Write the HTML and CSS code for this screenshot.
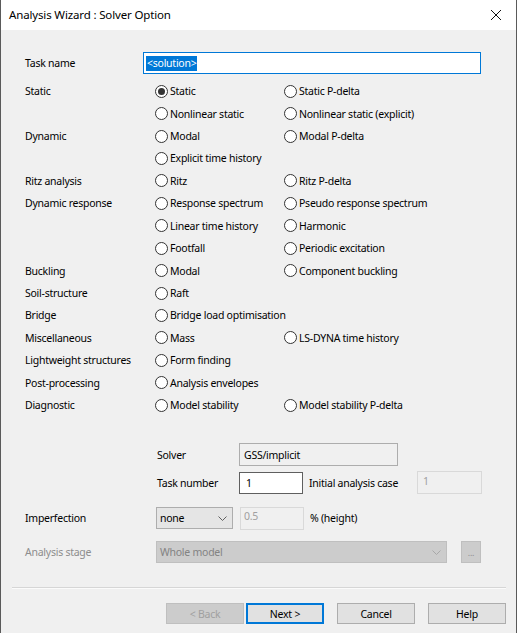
FILE: index.html
```html
<!DOCTYPE html>
<html lang="en">
<head>
    <meta charset="UTF-8">
    <title>Analysis Wizard : Solver Option</title>
    <link rel="stylesheet" href="styles.css">
</head>
<body>
    <div class="window">
        <div class="titlebar">
            <span class="title">Analysis Wizard : Solver Option</span>
            <svg class="close" viewBox="0 0 12 12" width="12" height="12">
                <path d="M1 1L11 11M11 1L1 11" stroke="#111" stroke-width="1" fill="none"/>
            </svg>
        </div>

        <div class="content">
            <div class="task-row">
                <span class="label">Task name</span>
                <div class="text-input focused"><span class="selected">&lt;solution&gt;</span></div>
            </div>

            <div class="options">
                <span class="label">Static</span>
                <label class="radio checked"><i></i>Static</label>
                <label class="radio"><i></i>Static P-delta</label>

                <span class="label"></span>
                <label class="radio"><i></i>Nonlinear static</label>
                <label class="radio"><i></i>Nonlinear static (explicit)</label>

                <span class="label">Dynamic</span>
                <label class="radio"><i></i>Modal</label>
                <label class="radio"><i></i>Modal P-delta</label>

                <span class="label"></span>
                <label class="radio span"><i></i>Explicit time history</label>

                <span class="label">Ritz analysis</span>
                <label class="radio"><i></i>Ritz</label>
                <label class="radio"><i></i>Ritz P-delta</label>

                <span class="label">Dynamic response</span>
                <label class="radio"><i></i>Response spectrum</label>
                <label class="radio"><i></i>Pseudo response spectrum</label>

                <span class="label"></span>
                <label class="radio"><i></i>Linear time history</label>
                <label class="radio"><i></i>Harmonic</label>

                <span class="label"></span>
                <label class="radio"><i></i>Footfall</label>
                <label class="radio"><i></i>Periodic excitation</label>

                <span class="label">Buckling</span>
                <label class="radio"><i></i>Modal</label>
                <label class="radio"><i></i>Component buckling</label>

                <span class="label">Soil-structure</span>
                <label class="radio span"><i></i>Raft</label>

                <span class="label">Bridge</span>
                <label class="radio span"><i></i>Bridge load optimisation</label>

                <span class="label">Miscellaneous</span>
                <label class="radio"><i></i>Mass</label>
                <label class="radio"><i></i>LS-DYNA time history</label>

                <span class="label">Lightweight structures</span>
                <label class="radio span"><i></i>Form finding</label>

                <span class="label">Post-processing</span>
                <label class="radio span"><i></i>Analysis envelopes</label>

                <span class="label">Diagnostic</span>
                <label class="radio"><i></i>Model stability</label>
                <label class="radio"><i></i>Model stability P-delta</label>
            </div>

            <div class="solver">
                <div class="solver-row">
                    <span class="sub-label">Solver</span>
                    <div class="readonly-box">GSS/implicit</div>
                </div>
                <div class="solver-row task-number">
                    <span class="sub-label">Task number</span>
                    <div class="text-input short">1</div>
                    <span class="after-label">Initial analysis case</span>
                    <div class="disabled-box">1</div>
                </div>
            </div>

            <div class="imperfection-row">
                <span class="label">Imperfection</span>
                <div class="select">
                    <span>none</span>
                    <svg viewBox="0 0 9 5" width="9" height="5"><path d="M0.5 0.5L4.5 4.5L8.5 0.5" stroke="#606060" fill="none"/></svg>
                </div>
                <div class="disabled-box short">0.5</div>
                <span class="after-label">% (height)</span>
            </div>

            <div class="stage-row">
                <span class="label muted">Analysis stage</span>
                <div class="select wide disabled">
                    <span>Whole model</span>
                    <svg viewBox="0 0 9 5" width="9" height="5"><path d="M0.5 0.5L4.5 4.5L8.5 0.5" stroke="#a8a8a8" fill="none"/></svg>
                </div>
                <div class="dots-button">...</div>
            </div>
        </div>

        <hr class="separator">

        <div class="buttons">
            <button class="button disabled">&lt; Back</button>
            <button class="button default">Next &gt;</button>
            <button class="button gap">Cancel</button>
            <button class="button gap">Help</button>
        </div>
    </div>
</body>
</html>
```

FILE: styles.css
```css
html, body {
    margin: 0;
    padding: 0;
    background-color: #f0f0f0;
}
body {
    font-family: "Noto Sans", "Open Sans", sans-serif;
    font-size: 10.5px;
    letter-spacing: -0.25px;
    color: #000;
}
.window {
    width: 517px;
    height: 633px;
    box-sizing: border-box;
    border-left: 1px solid #5a5a5a;
    border-right: 1px solid #5a5a5a;
    background-color: #f0f0f0;
    overflow: hidden;
}
.titlebar {
    height: 30px;
    background-color: white;
    display: flex;
    align-items: center;
    justify-content: space-between;
    padding: 0 14px 0 8px;
}
.title {
    font-size: 11.5px;
    letter-spacing: -0.15px;
    color: #000;
    margin-top: -1px;
}
.close {
    display: block;
}
.content {
    padding-left: 24px;
}
.label {
    display: block;
    white-space: nowrap;
}
.label.muted {
    color: #8d8d8d;
}
.task-row {
    display: flex;
    align-items: center;
    margin-top: 22px;
    height: 22px;
}
.task-row .label {
    width: 118px;
}
.text-input {
    box-sizing: border-box;
    height: 22px;
    background-color: white;
    border: 1px solid #7a7a7a;
    display: flex;
    align-items: center;
    padding-left: 3px;
}
.text-input.focused {
    width: 338px;
    border-color: #0078d7;
    padding-left: 2px;
}
.text-input.short {
    width: 64px;
    border-color: #5f5f5f;
    padding-left: 6px;
}
.selected {
    background-color: #0078d7;
    color: white;
    line-height: 15px;
    padding: 0 1px;
}
.options {
    display: grid;
    grid-template-columns: 130px 129px 1fr;
    grid-auto-rows: 22.43px;
    align-items: center;
    margin-top: 6px;
}
.radio {
    display: flex;
    align-items: center;
    white-space: nowrap;
}
.radio.span {
    grid-column: 2 / 4;
}
.radio i {
    flex-shrink: 0;
    box-sizing: border-box;
    width: 13px;
    height: 13px;
    border: 1px solid #333;
    border-radius: 50%;
    background-color: white;
    margin-right: 2px;
    display: flex;
    align-items: center;
    justify-content: center;
}
.radio.checked i::after {
    content: "";
    width: 7px;
    height: 7px;
    border-radius: 50%;
    background-color: #333;
}
.solver {
    padding-left: 131px;
    margin-top: 27px;
}
.solver-row {
    display: flex;
    align-items: center;
    height: 23px;
}
.solver-row.task-number {
    margin-top: 5px;
    height: 23px;
}
.sub-label {
    width: 83px;
    padding-left: 1px;
    box-sizing: border-box;
}
.readonly-box {
    box-sizing: border-box;
    width: 159px;
    height: 23px;
    border: 1px solid #adadad;
    display: flex;
    align-items: center;
    padding-left: 4px;
}
.after-label {
    margin-left: 6px;
    width: 108px;
    white-space: nowrap;
}
.disabled-box {
    box-sizing: border-box;
    width: 65px;
    height: 23px;
    border: 1px solid #d9d9d9;
    color: #a0a0a0;
    padding: 2px 0 0 5px;
}
.disabled-box.short {
    width: 64px;
    margin-left: 7px;
    padding-top: 1px;
    padding-left: 3px;
}
.imperfection-row {
    display: flex;
    align-items: center;
    margin-top: 13px;
    height: 22px;
}
.imperfection-row .label,
.stage-row .label {
    width: 131px;
}
.select {
    box-sizing: border-box;
    width: 77px;
    height: 22px;
    background-color: #e5e5e5;
    border: 1px solid #adadad;
    display: flex;
    align-items: center;
    justify-content: space-between;
    padding: 0 5px 0 3px;
}
.select.wide {
    width: 291px;
}
.select.disabled {
    background-color: #cccccc;
    border-color: #bfbfbf;
    color: #838383;
}
.stage-row {
    display: flex;
    align-items: center;
    margin-top: 12px;
    height: 22px;
}
.dots-button {
    box-sizing: border-box;
    width: 20px;
    height: 22px;
    margin-left: 14px;
    background-color: #cccccc;
    border: 1px solid #bfbfbf;
    color: #909090;
    font-size: 9px;
    text-align: center;
    line-height: 22px;
}
.separator {
    margin: 24px 10px 0 11px;
    border: 0;
    border-top: 1px solid #d6d6d6;
    border-bottom: 1px solid #fbfbfb;
    height: 0;
}
.buttons {
    display: flex;
    justify-content: flex-end;
    padding-right: 10px;
    margin-top: 14px;
}
.button {
    box-sizing: border-box;
    width: 78px;
    height: 21px;
    font-family: inherit;
    font-size: 10.5px;
    letter-spacing: -0.25px;
    background-color: #e1e1e1;
    border: 1px solid #adadad;
    color: #000;
    padding: 0;
    margin-left: 2px;
}
.button.gap {
    margin-left: 13px;
}
.button.disabled {
    background-color: #cccccc;
    border-color: #bfbfbf;
    color: #a0a0a0;
}
.button.default {
    border-color: #0078d7;
    box-shadow: inset 0 0 0 1px #0078d7;
}
```
